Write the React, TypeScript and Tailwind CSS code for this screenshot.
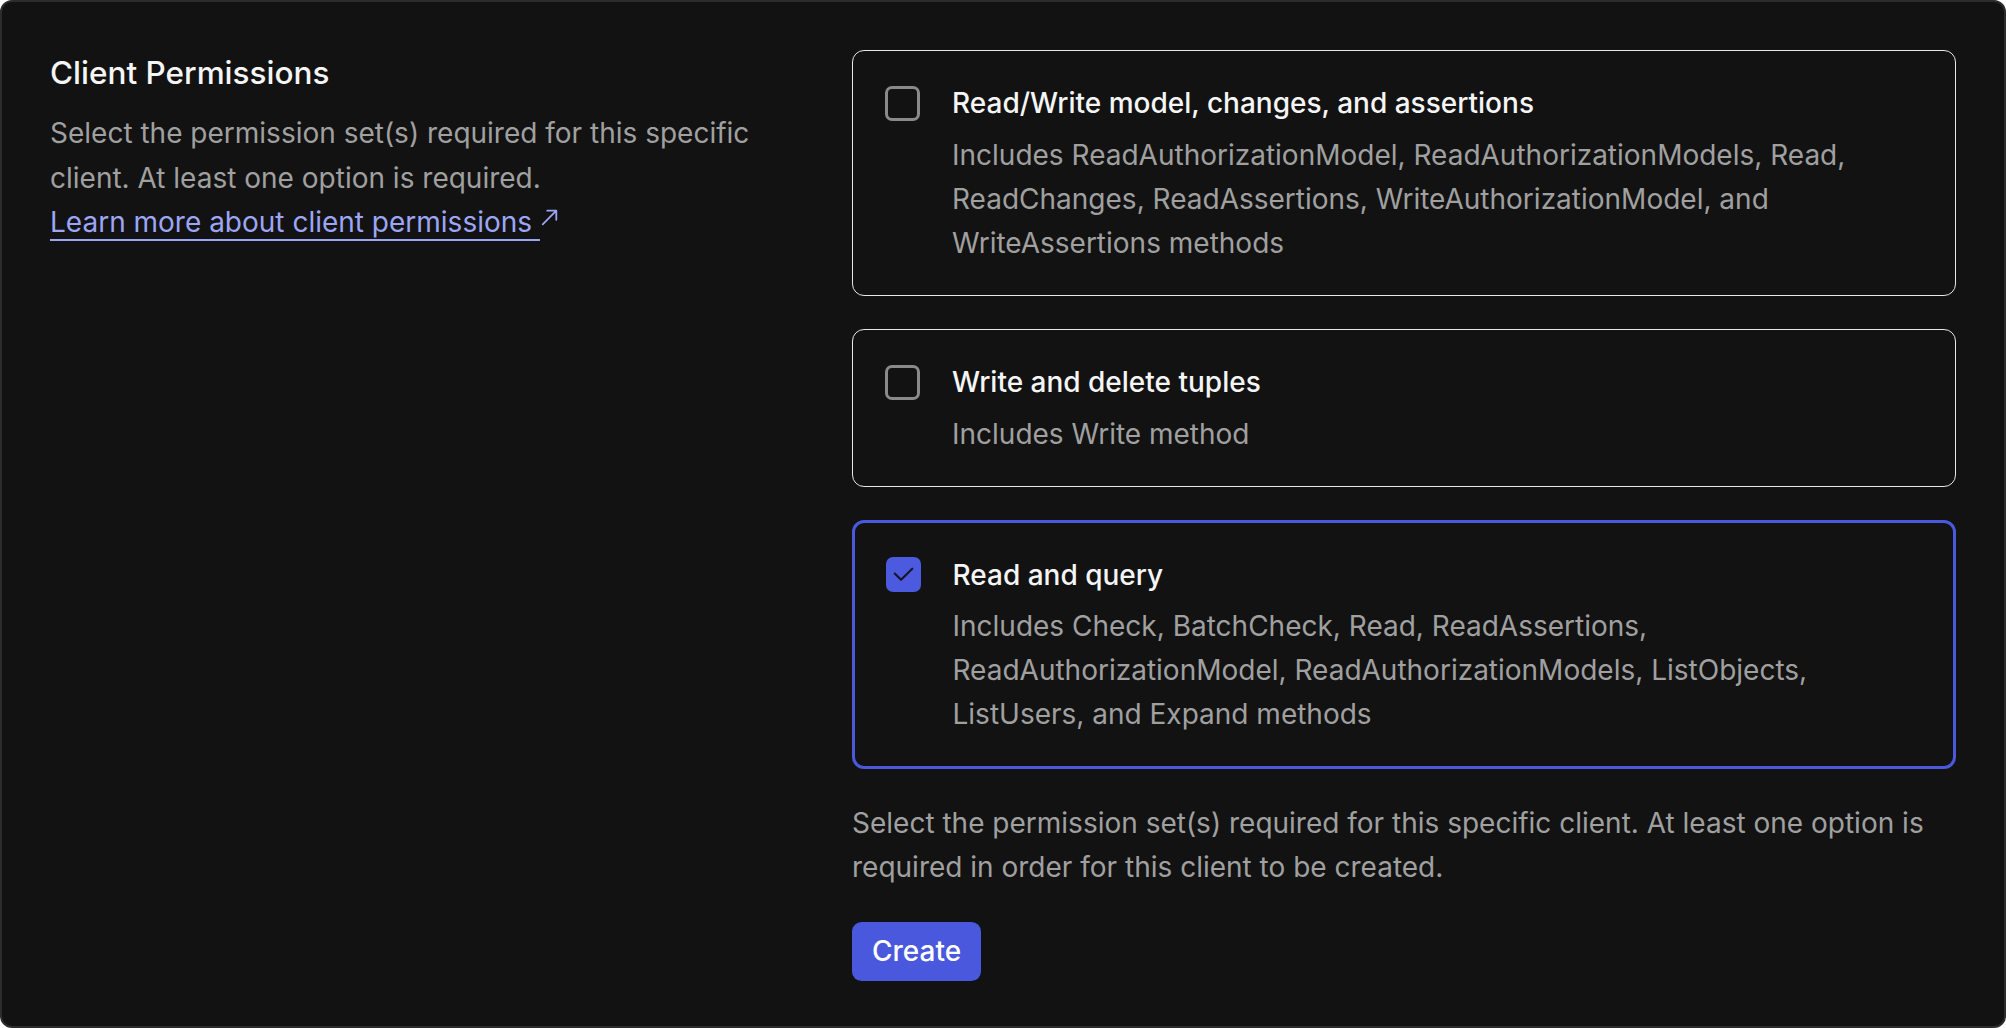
import React from "react";

type Perm = { title: string; desc: string; checked: boolean };

const perms: Perm[] = [
  {
    title: "Read/Write model, changes, and assertions",
    desc: "Includes ReadAuthorizationModel, ReadAuthorizationModels, Read, ReadChanges, ReadAssertions, WriteAuthorizationModel, and WriteAssertions methods",
    checked: false,
  },
  {
    title: "Write and delete tuples",
    desc: "Includes Write method",
    checked: false,
  },
  {
    title: "Read and query",
    desc: "Includes Check, BatchCheck, Read, ReadAssertions, ReadAuthorizationModel, ReadAuthorizationModels, ListObjects, ListUsers, and Expand methods",
    checked: true,
  },
];

function Checkbox({ checked }: { checked: boolean }) {
  if (checked) {
    return (
      <div className="flex h-[35px] w-[35px] items-center justify-center rounded-[7px] bg-[#4b5ade]">
        <svg width="35" height="35" viewBox="0 0 36 36" fill="none">
          <path d="M9 17 L15.5 23.5 L27 12" stroke="#15162a" strokeWidth="2.2" strokeLinecap="round" strokeLinejoin="round" />
        </svg>
      </div>
    );
  }
  return <div className="h-[35px] w-[35px] rounded-[7px] border-[3px] border-[#8a8a8a]" />;
}

function Card({ p }: { p: Perm }) {
  return (
    <div
      className={
        p.checked
          ? "flex gap-[32px] rounded-[12px] border-[3px] border-[#4a59dc] px-[30.5px] py-[30px]"
          : "flex gap-[32px] rounded-[12px] border-[1.6px] border-[#e8e8e8] px-[32px] py-[30px]"
      }
    >
      <div className="flex h-[44.8px] shrink-0 items-center">
        <Checkbox checked={p.checked} />
      </div>
      <div className="flex flex-col gap-[7px]">
        <div className="text-[28px] font-medium leading-[44.8px] text-[#f5f5f5]">{p.title}</div>
        <div className="text-[28px] leading-[44px] text-[#a0a0a0]">{p.desc}</div>
      </div>
    </div>
  );
}

export default function App() {
  return (
    <div className="min-h-screen bg-white" style={{ fontFamily: "Inter, 'Noto Sans', sans-serif" }}>
      <div className="box-border flex h-[1028px] w-[2006px] rounded-[12px] border-2 border-[#2c2c2c] bg-[#121212] p-[48px]">
        <div className="w-[770px] shrink-0 pt-[1px]">
          <h2 className="text-[31.5px] font-medium leading-[44.8px] text-[#f5f5f5]">Client Permissions</h2>
          <p className="mt-[15px] text-[28px] leading-[44.8px] text-[#a0a0a0]">
            Select the permission set(s) required for this specific client. At least one option is required.
          </p>
          <div className="flex items-center text-[28px] leading-[44.8px] text-[#9ca6f4]">
            <a href="#" className="underline decoration-[1.6px] underline-offset-[7px]">
              Learn more about client permissions{"\u00a0"}
            </a>
            <svg width="17" height="17" viewBox="0 0 15 15" fill="none" className="mb-[10px] ml-[1px]">
              <path d="M1.5 13.5 L13.5 1.5 M5.5 1.5 H13.5 V9.5" stroke="#9ca6f4" strokeWidth="1.6" strokeLinecap="round" strokeLinejoin="round" />
            </svg>
          </div>
        </div>
        <div className="ml-[32px] flex flex-1 flex-col">
          <div className="flex flex-col gap-[33px]">
            {perms.map((p) => (
              <Card key={p.title} p={p} />
            ))}
          </div>
          <p className="mt-[32px] text-[28px] leading-[44px] text-[#a0a0a0]">
            Select the permission set(s) required for this specific client. At least one option is required in order for this client to be created.
          </p>
          <div className="mt-[33px]">
            <button className="h-[59px] rounded-[9.6px] bg-[#4a58dd] px-[20px] text-[28px] font-medium leading-[44.8px] text-white">
              Create
            </button>
          </div>
        </div>
      </div>
    </div>
  );
}
